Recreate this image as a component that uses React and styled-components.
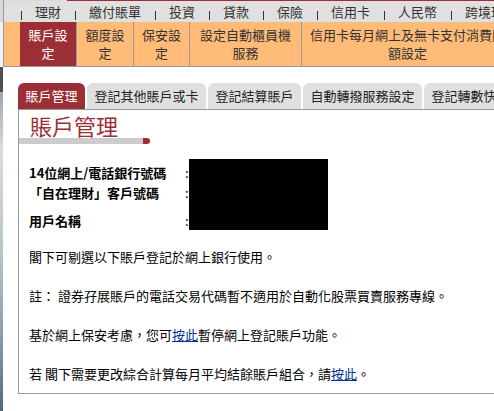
import React from 'react';
import styled, { createGlobalStyle } from 'styled-components';

const GlobalStyle = createGlobalStyle`
    html, body {
        margin: 0;
        padding: 0;
        background: #fff;
    }
    body {
        font-family: "Noto Sans CJK TC", "Noto Sans", sans-serif;
        font-size: 13px;
        color: #000;
        overflow: hidden;
    }
`

const RED = '#9b2f35'

const Page = styled.div`
    display: flex;
    width: 494px;
    height: 411px;
    overflow: hidden;
`

// bit of the backdrop photo showing at the left edge
const Backdrop = styled.div`
    flex: none;
    width: 3px;
    background: linear-gradient(to bottom,
        #d9d9d9 0 22px, #f2f2f2 22px 67px, #505050 67px 92px,
        #9aa6b0 92px, #d5dde3 150px, #b8c4cc 250px, #8fa0ad 330px, #4f6b80 411px);
`

const Main = styled.div`
    flex: 1;
    min-width: 0;
    overflow: hidden;
    display: flex;
    flex-direction: column;
`

const TopLine = styled.div`
    height: 1px;
    border-left: 1px solid #999;
    background: linear-gradient(to right, #dcdcdc 63px, ${RED} 63px);
`

const Nav = styled.nav`
    display: flex;
    align-items: center;
    height: 21px;
    padding-left: 17px;
    background: #e0e0e0;
    border-left: 1px solid #999;
    white-space: nowrap;
`

const NavItem = styled.span`
    position: relative;
    flex: none;
    padding: 0 14px;
    line-height: 21px;
    color: #333;

    &::before {
        content: '';
        position: absolute;
        left: 0;
        top: 10px;
        width: 1px;
        height: 9px;
        background: #333;
    }
`

const SubNav = styled.div`
    display: flex;
    height: 44px;
    padding-left: 16px;
    background: #ffbb77;
    border-left: 1px solid #999;
    border-bottom: 1px solid #999;
`

const SubItem = styled.div`
    flex: none;
    box-sizing: border-box;
    width: ${p => p.$w}px;
    padding: 0 ${p => p.$pad ?? 8}px;
    display: flex;
    align-items: center;
    justify-content: center;
    text-align: center;
    line-height: 18px;
    border-right: 1px solid #999;
    background: ${p => p.$active ? RED : 'transparent'};
    color: ${p => p.$active ? '#fff' : '#333'};
`

const Body = styled.div`
    padding: 16px 0 0 15px;
`

const TabRow = styled.div`
    display: flex;
    gap: 2px;
    height: 26px;
    white-space: nowrap;
`

const Tab = styled.div`
    flex: none;
    padding: 0 7.5px;
    line-height: 26px;
    border-radius: 6px 6px 0 0;
    background: ${p => p.$active ? RED : '#e0e0e0'};
    color: ${p => p.$active ? '#fff' : '#222'};
`

const Panel = styled.section`
    width: 520px;
    border: 1px solid #999;
    background: #fff;
    padding-bottom: 10px;
`

const Heading = styled.h1`
    margin: 0;
    padding: 3px 0 0 11px;
    font-size: 22px;
    line-height: 25px;
    font-weight: normal;
    color: ${RED};
`

const HeadingBar = styled.div`
    width: 131px;
    height: 6px;
    border-radius: 0 3px 3px 0;
    background: linear-gradient(to right, #ccc 124px, ${RED} 124px);
`

const InfoGrid = styled.div`
    display: grid;
    grid-template-columns: 156px 4px 139px;
    grid-template-rows: 23px 20px 28px;
    margin: 15px 0 0 10px;
`

const Label = styled.div`
    align-self: end;
    line-height: 18px;
    font-weight: bold;
    white-space: nowrap;
`

const Colon = styled.div`
    align-self: end;
    line-height: 18px;
`

const Redacted = styled.div`
    grid-column: 3;
    grid-row: 1 / span 3;
    background: #000;
`

const Notes = styled.div`
    display: flex;
    flex-direction: column;
    gap: 21px;
    margin: 18px 0 0 10px;
`

const Note = styled.p`
    margin: 0;
    line-height: 18px;
    white-space: nowrap;
`

const Link = styled.a`
    color: #003399;
    text-decoration: underline;
`

const navItems = ['理財', '繳付賬單', '投資', '貸款', '保險', '信用卡', '人民幣', '跨境理財']

const subItems = [
    { label: '賬戶設定', w: 57, active: true },
    { label: '額度設定', w: 57 },
    { label: '保安設定', w: 56 },
    { label: '設定自動櫃員機服務', w: 112 },
    { label: '信用卡每月網上及無卡支付消費限額設定', w: 212, pad: 8 },
]

const tabs = ['賬戶管理', '登記其他賬戶或卡', '登記結算賬戶', '自動轉撥服務設定', '登記轉數快賬戶']

const info = ['14位網上/電話銀行號碼', '「自在理財」客戶號碼', '用戶名稱']

const App = () => {
    return (
        <Page>
            <GlobalStyle />
            <Backdrop />
            <Main>
                <TopLine />
                <Nav>
                    {navItems.map(item => <NavItem key={item}>{item}</NavItem>)}
                </Nav>
                <SubNav>
                    {subItems.map(item => (
                        <SubItem key={item.label} $w={item.w} $pad={item.pad} $active={item.active}>
                            {item.label}
                        </SubItem>
                    ))}
                </SubNav>
                <Body>
                    <TabRow>
                        {tabs.map((tab, i) => <Tab key={tab} $active={i === 0}>{tab}</Tab>)}
                    </TabRow>
                    <Panel>
                        <Heading>賬戶管理</Heading>
                        <HeadingBar />
                        <InfoGrid>
                            {info.map((label, i) => (
                                <React.Fragment key={label}>
                                    <Label style={{ gridRow: i + 1 }}>{label}</Label>
                                    <Colon style={{ gridRow: i + 1 }}>:</Colon>
                                </React.Fragment>
                            ))}
                            <Redacted />
                        </InfoGrid>
                        <Notes>
                            <Note>閣下可剔選以下賬戶登記於網上銀行使用。</Note>
                            <Note>註： 證券孖展賬戶的電話交易代碼暫不適用於自動化股票買賣服務專線。</Note>
                            <Note>基於網上保安考慮，您可<Link href="#">按此</Link>暫停網上登記賬戶功能。</Note>
                            <Note>若 閣下需要更改綜合計算每月平均結餘賬戶組合，請<Link href="#">按此</Link>。</Note>
                        </Notes>
                    </Panel>
                </Body>
            </Main>
        </Page>
    )
}

export default App
